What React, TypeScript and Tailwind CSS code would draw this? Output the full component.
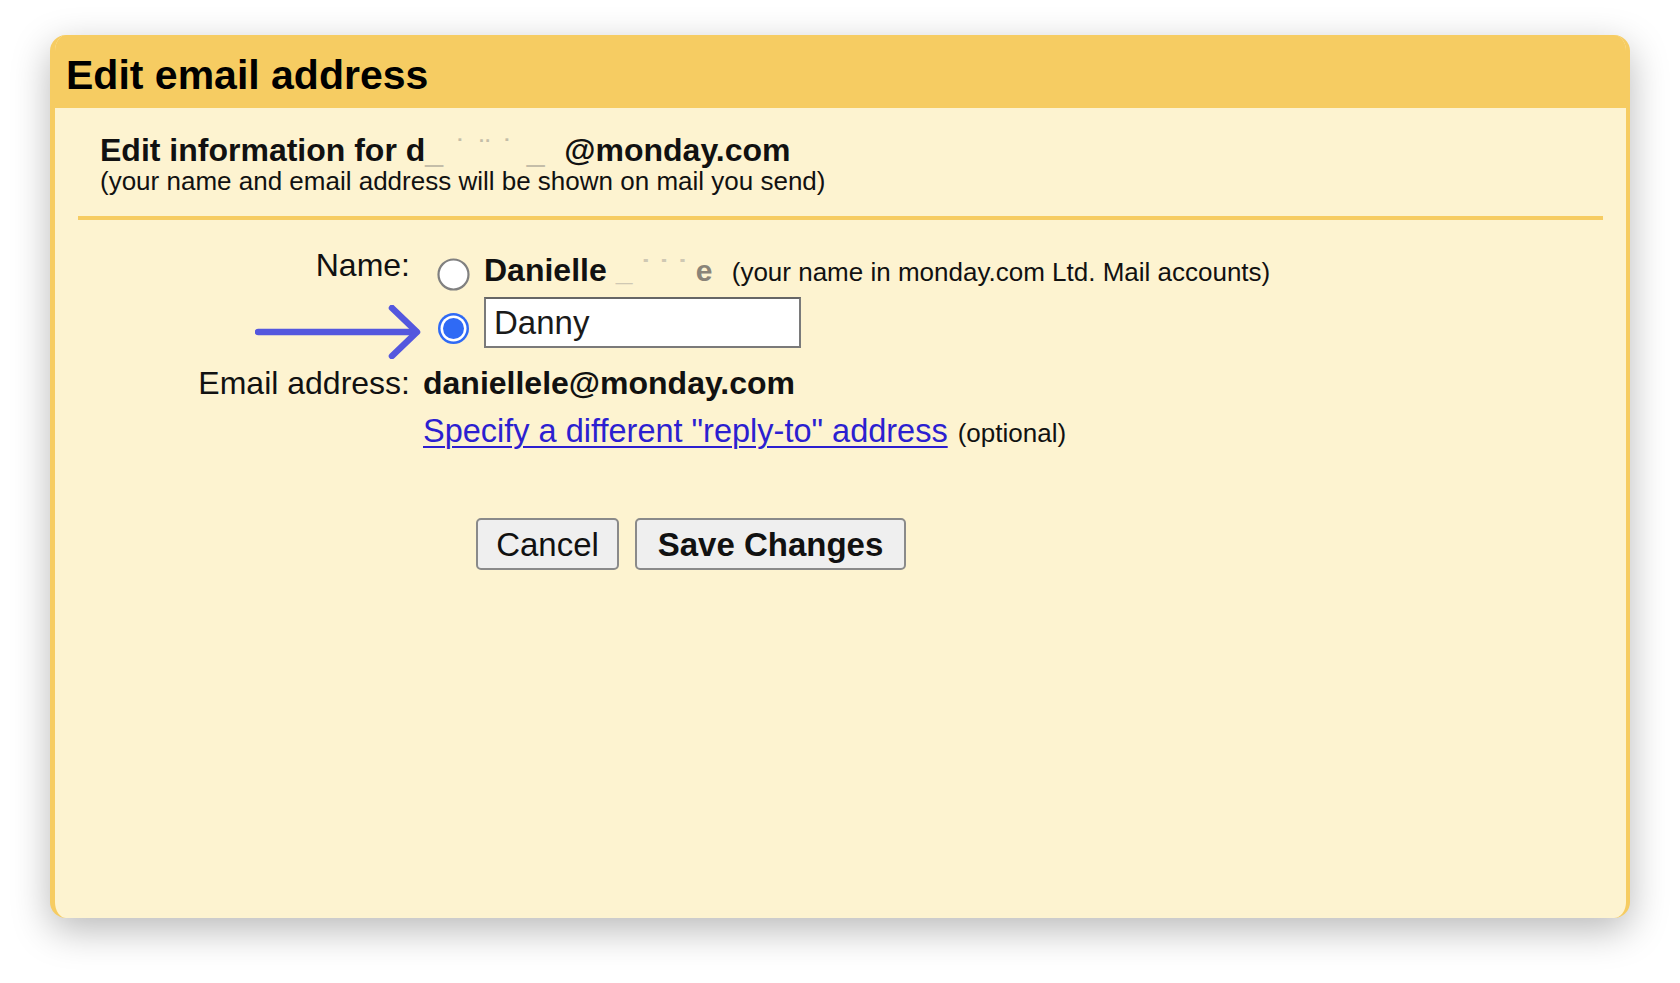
import React from "react";

// Radio drawn to match the macOS-style controls in the screenshot
function Radio({ checked }: { checked?: boolean }) {
  return (
    <svg width="33" height="33" viewBox="0 0 33 33" className="shrink-0">
      {checked ? (
        <>
          <circle cx="16.5" cy="16.5" r="15.5" fill="#2f6af5" />
          <circle cx="16.5" cy="16.5" r="13" fill="#ffffff" />
          <circle cx="16.5" cy="16.5" r="10.5" fill="#2f6af5" />
        </>
      ) : (
        <circle cx="16.5" cy="16.5" r="15" fill="#ffffff" stroke="#808080" strokeWidth="2.2" />
      )}
    </svg>
  );
}

export default function App() {
  return (
    <div className="min-h-screen w-full bg-white font-['Liberation_Sans',Arial,sans-serif] text-[#111]">
      <div className="pt-[35px] pl-[50px]">
        <div className="w-[1580px] h-[883px] rounded-[16px] overflow-hidden bg-[#fdf3d0] border-l-[5px] border-r-[4px] border-[#f6cc62] shadow-[0_12px_38px_rgba(0,0,0,0.28)] flex flex-col">
          {/* ── Header ─────────────────────────────── */}
          <div className="h-[73px] bg-[#f6cc62] pl-[11px] pt-[17px] shrink-0">
            <h1 className="text-[41px] leading-[46px] font-bold text-black">Edit email address</h1>
          </div>

          {/* ── Intro ──────────────────────────────── */}
          <div className="pl-[45px] pt-[25px]">
            <p className="text-[32px] leading-[34px] font-bold whitespace-nowrap">
              Edit information for d
              <span className="inline-block w-[139px] whitespace-nowrap font-normal text-[#c4bda8] tracking-[2px]"> _ ˙ ¨ ˙ _</span>
              @monday.com
            </p>
            <p className="text-[26px] leading-[28px]">(your name and email address will be shown on mail you send)</p>
          </div>

          <div className="mx-[23px] mt-[21px] h-[4px] bg-[#f6cc62]" />

          {/* ── Form ───────────────────────────────── */}
          <div className="mt-[27px]">
            {/* Name row */}
            <div className="flex items-start">
              <div className="w-[355px] text-right text-[32px] leading-[36px]">Name:</div>
              <div className="pl-[27px] flex items-start">
                <div className="mt-[11px]">
                  <Radio />
                </div>
                <div className="ml-[14px] mt-[5px] flex items-baseline leading-[36px] whitespace-nowrap">
                  <span className="text-[32px] font-bold">Danielle</span>
                  <span className="inline-block w-[107px] ml-[9px] whitespace-nowrap text-[30px] font-bold text-[#cfc8b3]">_ ˙ ˙ ˙ <span className="text-[#8a8478]">e</span></span>
                  <span className="ml-[9px] text-[26px]">(your name in monday.com Ltd. Mail accounts)</span>
                </div>
              </div>
            </div>

            {/* Custom name row */}
            <div className="relative flex items-start mt-[6px]">
              <svg
                className="absolute left-[200px] top-[8px]"
                width="168"
                height="54"
                viewBox="0 0 168 54"
                fill="none"
                stroke="#5457de"
                strokeWidth="6.5"
                strokeLinecap="round"
                strokeLinejoin="round"
              >
                <path d="M3 27 H161" />
                <path d="M137 3 L162 27 L137 51" />
              </svg>
              <div className="w-[355px]" />
              <div className="pl-[27px] flex items-start">
                <div className="mt-[15px]">
                  <Radio checked />
                </div>
                <div className="ml-[14px] w-[317px] h-[51px] bg-white border-2 border-[#7a7a7a] border-t-[#666] pl-[8px] flex items-center">
                  <span className="text-[33px] leading-[38px] text-[#1a1a1a]">Danny</span>
                </div>
              </div>
            </div>

            {/* Email row */}
            <div className="flex items-baseline mt-[17px] leading-[36px]">
              <div className="w-[355px] text-right text-[32px]">Email address:</div>
              <div className="pl-[13px] text-[32px] font-bold">daniellele@monday.com</div>
            </div>

            {/* Reply-to row */}
            <div className="flex items-baseline mt-[12px] leading-[36px]">
              <div className="w-[355px]" />
              <div className="pl-[13px] flex items-baseline">
                <a href="#" className="text-[32.5px] text-[#2c1fd0] underline decoration-2 underline-offset-[4px]">
                  Specify a different "reply-to" address
                </a>
                <span className="ml-[10px] text-[26px]">(optional)</span>
              </div>
            </div>

            {/* Buttons */}
            <div className="flex mt-[67px] pl-[421px] gap-[16px]">
              <button className="w-[143px] h-[52px] rounded-[5px] bg-[#efefef] border-2 border-[#8a8a8a] text-[33px] leading-none text-[#111]">
                Cancel
              </button>
              <button className="w-[271px] h-[52px] rounded-[5px] bg-[#efefef] border-2 border-[#8a8a8a] text-[33px] leading-none font-bold text-[#111]">
                Save Changes
              </button>
            </div>
          </div>
        </div>
      </div>
    </div>
  );
}
